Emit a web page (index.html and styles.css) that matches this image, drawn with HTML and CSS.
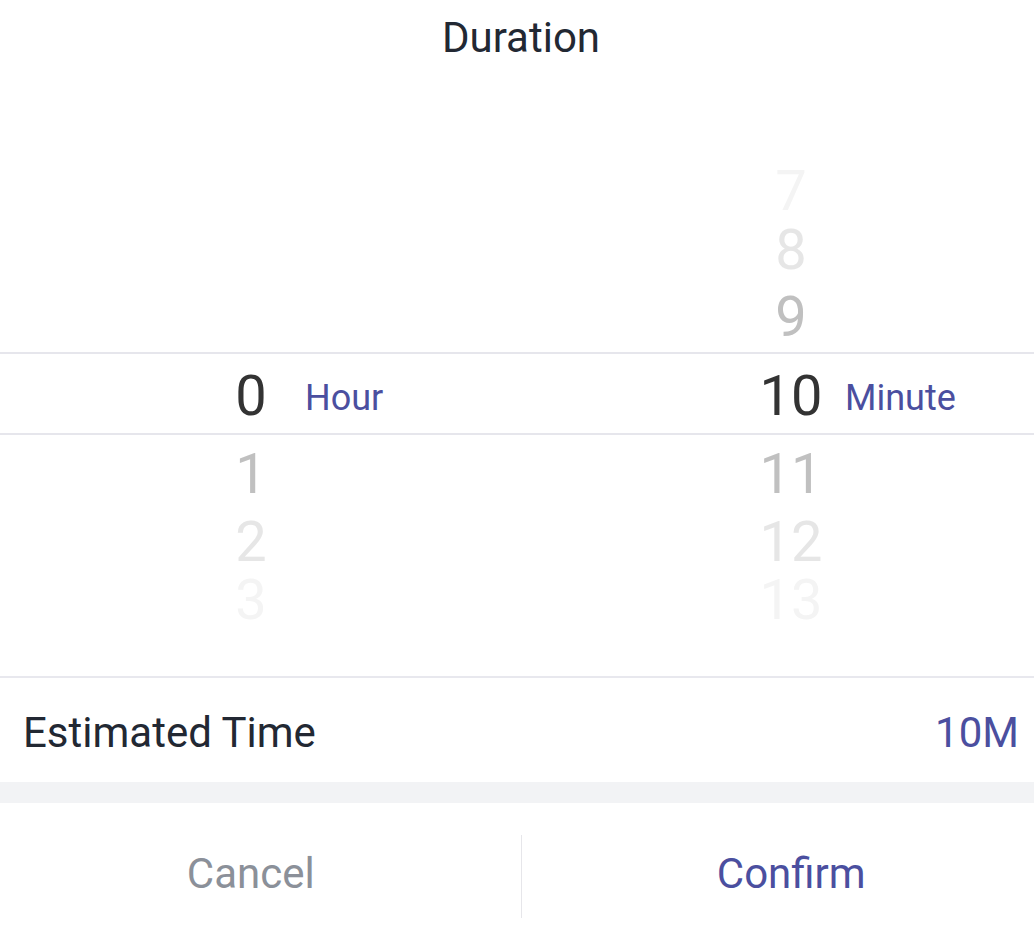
FILE: index.html
```html
<!DOCTYPE html>
<html lang="en">
<head>
<meta charset="utf-8">
<title>Duration</title>
<link rel="stylesheet" href="styles.css">
</head>
<body>
<div class="sheet">
  <header class="header">Duration</header>
  <section class="picker">
    <div class="wheel">
      <div class="item far3"></div>
      <div class="item far2"></div>
      <div class="item far1"></div>
      <div class="item sel">0</div>
      <div class="item far1">1</div>
      <div class="item far2">2</div>
      <div class="item far3">3</div>
    </div>
    <div class="wheel">
      <div class="item far3">7</div>
      <div class="item far2">8</div>
      <div class="item far1">9</div>
      <div class="item sel">10</div>
      <div class="item far1">11</div>
      <div class="item far2">12</div>
      <div class="item far3">13</div>
    </div>
    <div class="selection">
      <div class="unit">Hour</div>
      <div class="unit">Minute</div>
    </div>
  </section>
  <div class="estimate">
    <span class="est-label">Estimated Time</span>
    <span class="est-value">10M</span>
  </div>
  <div class="band"></div>
  <div class="actions">
    <button class="btn cancel">Cancel</button>
    <button class="btn confirm">Confirm</button>
  </div>
</div>
</body>
</html>
```

FILE: styles.css
```css
html, body {
  margin: 0;
  padding: 0;
  background: #ffffff;
  overflow: hidden;
}

body {
  font-family: Roboto, "Noto Sans", "Liberation Sans", sans-serif;
}

.sheet {
  width: 1080px;
  margin-left: -19px;
}

.header {
  height: 74px;
  display: flex;
  align-items: center;
  justify-content: center;
  font-size: 42px;
  color: #222833;
}

.picker {
  position: relative;
  height: 602px;
  box-sizing: border-box;
  padding-top: 88px;
  display: flex;
  overflow: hidden;
}

.wheel {
  flex: 1;
  display: flex;
  flex-direction: column;
  align-items: center;
}

.item {
  display: flex;
  align-items: center;
  justify-content: center;
  font-size: 56px;
  line-height: 1;
  width: 200px;
}

.sel { height: 81px; color: #333333; }
.far1 { height: 76px; color: #c0c0c0; }
.far2 { height: 59px; color: #e6e6e6; }
.far3 { height: 58px; color: #f4f4f4; }

.selection {
  position: absolute;
  left: 0;
  right: 0;
  top: 278px;
  height: 83px;
  box-sizing: border-box;
  border-top: 2px solid #e6e6ec;
  border-bottom: 2px solid #e6e6ec;
  display: grid;
  grid-template-columns: 1fr 1fr;
}

.unit {
  display: flex;
  align-items: center;
  padding-left: calc(50% + 54px);
  padding-top: 8px;
  font-size: 36px;
  color: #4b4f9f;
}

.estimate {
  height: 106px;
  box-sizing: border-box;
  border-top: 2px solid #e8e8ee;
  padding: 4px 42px 0 42px;
  display: flex;
  align-items: center;
  justify-content: space-between;
  font-size: 42px;
}

.est-label { color: #222833; }
.est-value { color: #4b4f9f; }

.band {
  height: 21px;
  background: #f2f3f5;
}

.actions {
  height: 147px;
  display: flex;
}

.btn {
  flex: 1;
  margin: 32px 0;
  padding: 0 0 6px;
  border: 0;
  background: transparent;
  font-family: inherit;
  font-size: 42px;
  display: flex;
  align-items: center;
  justify-content: center;
}

.cancel { color: #8b9099; }
.confirm { color: #4b4f9f; border-left: 1px solid #e6e6ea; }
```
